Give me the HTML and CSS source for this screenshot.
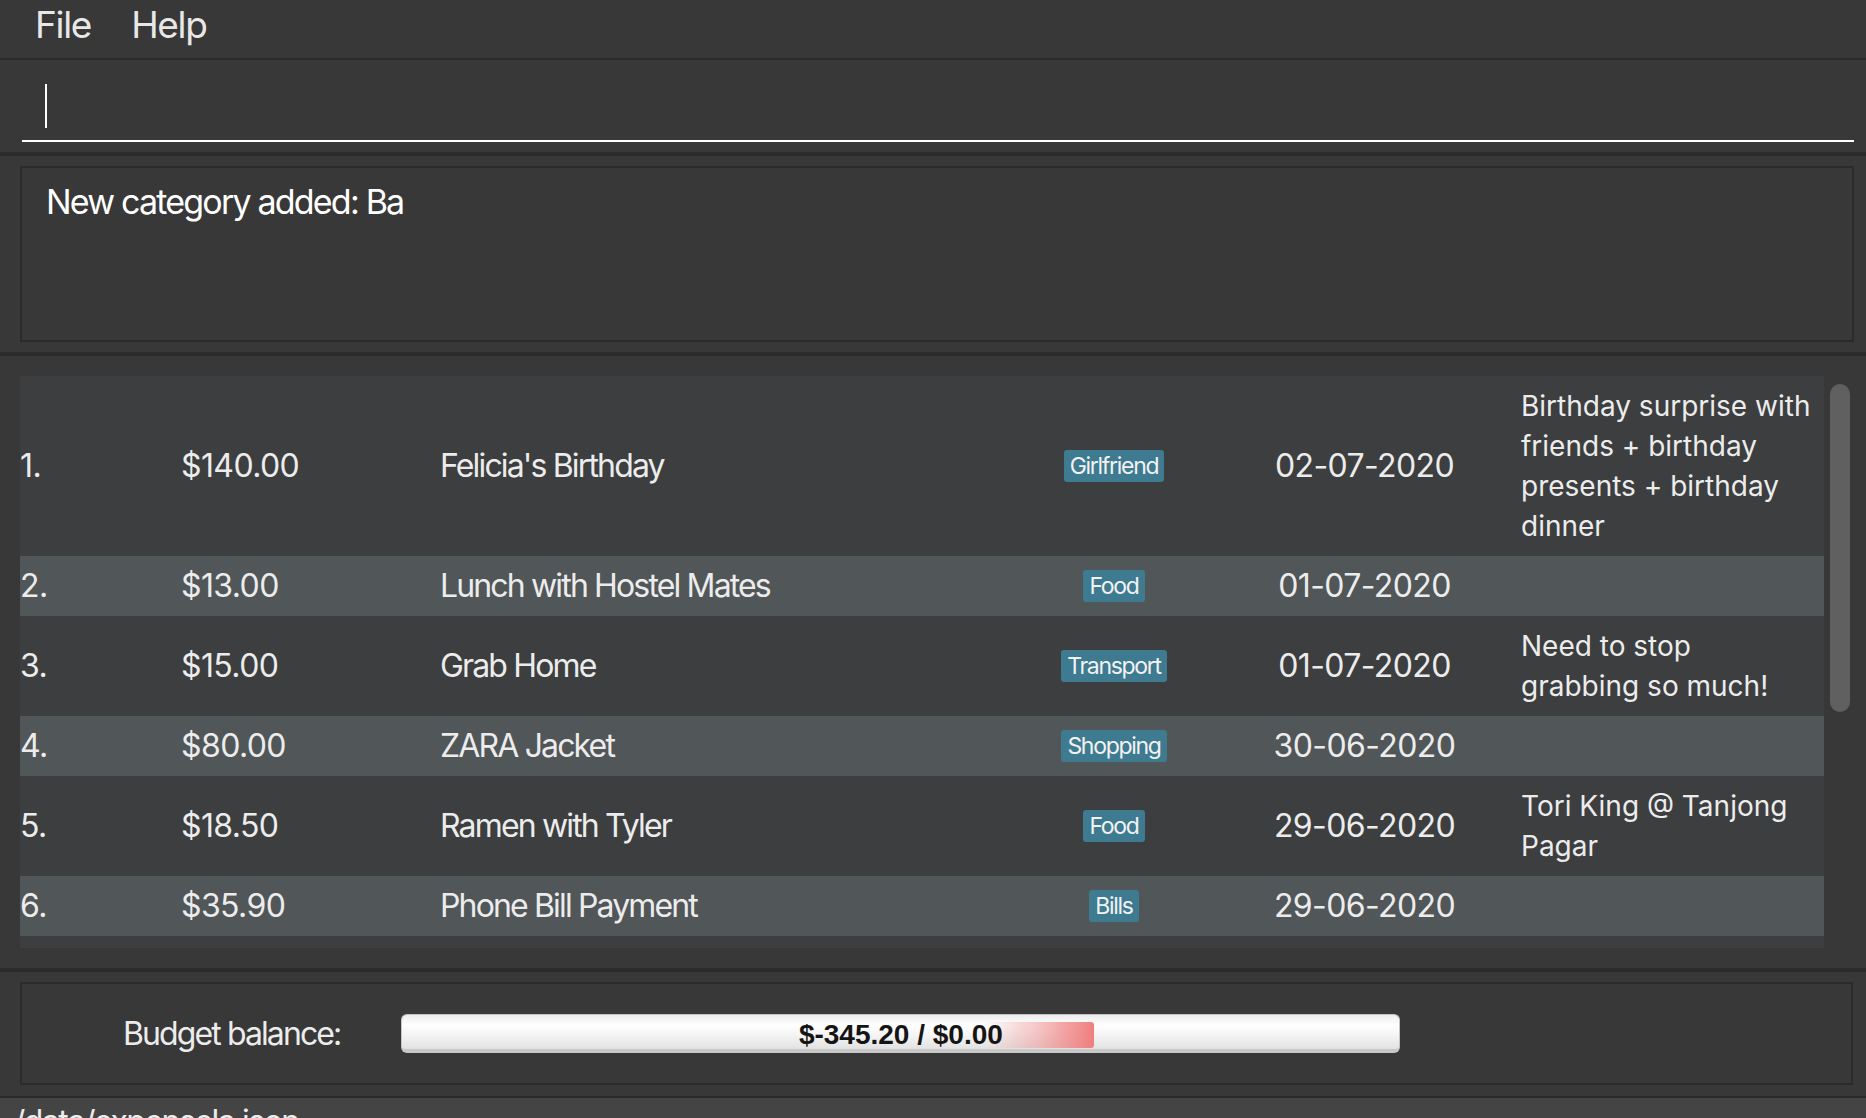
FILE: index.html
```html
<!DOCTYPE html>
<html>
<head>
<meta charset="utf-8">
<link rel="stylesheet" href="styles.css">
</head>
<body>
<div class="app">
  <div class="menubar">
    <span class="menu-item">File</span>
    <span class="menu-item">Help</span>
  </div>
  <div class="command">
    <div class="field"><span class="caret"></span></div>
  </div>
  <div class="result-pane">
    <div class="result-box">New category added: Ba</div>
  </div>
  <div class="list-pane">
    <div class="list">
      <div class="row">
        <div class="c-idx">1.</div>
        <div class="c-amt">$140.00</div>
        <div class="c-name">Felicia's Birthday</div>
        <div class="c-tag"><span class="tag">Girlfriend</span></div>
        <div class="c-date">02-07-2020</div>
        <div class="c-desc">Birthday surprise with friends + birthday presents + birthday dinner</div>
      </div>
      <div class="row alt">
        <div class="c-idx">2.</div>
        <div class="c-amt">$13.00</div>
        <div class="c-name">Lunch with Hostel Mates</div>
        <div class="c-tag"><span class="tag">Food</span></div>
        <div class="c-date">01-07-2020</div>
        <div class="c-desc"></div>
      </div>
      <div class="row">
        <div class="c-idx">3.</div>
        <div class="c-amt">$15.00</div>
        <div class="c-name">Grab Home</div>
        <div class="c-tag"><span class="tag">Transport</span></div>
        <div class="c-date">01-07-2020</div>
        <div class="c-desc">Need to stop grabbing so much!</div>
      </div>
      <div class="row alt">
        <div class="c-idx">4.</div>
        <div class="c-amt">$80.00</div>
        <div class="c-name">ZARA Jacket</div>
        <div class="c-tag"><span class="tag">Shopping</span></div>
        <div class="c-date">30-06-2020</div>
        <div class="c-desc"></div>
      </div>
      <div class="row">
        <div class="c-idx">5.</div>
        <div class="c-amt">$18.50</div>
        <div class="c-name">Ramen with Tyler</div>
        <div class="c-tag"><span class="tag">Food</span></div>
        <div class="c-date">29-06-2020</div>
        <div class="c-desc">Tori King @ Tanjong Pagar</div>
      </div>
      <div class="row alt">
        <div class="c-idx">6.</div>
        <div class="c-amt">$35.90</div>
        <div class="c-name">Phone Bill Payment</div>
        <div class="c-tag"><span class="tag">Bills</span></div>
        <div class="c-date">29-06-2020</div>
        <div class="c-desc"></div>
      </div>
    </div>
    <div class="scroll-track"><div class="scroll-thumb"></div></div>
  </div>
  <div class="budget-pane">
    <div class="budget-box">
      <span class="budget-label">Budget balance:</span>
      <div class="bar">
        <div class="bar-fill" style="width: 690px"></div>
        <div class="bar-text">$-345.20 / $0.00</div>
      </div>
    </div>
  </div>
  <div class="status-bar">./data/expensela.json</div>
</div>
</body>
</html>
```
FILE: styles.css
```css
html, body {
  margin: 0;
  padding: 0;
}
body {
  background: #383838;
  font-family: Inter, "Noto Sans", sans-serif;
  color: #ececec;
  width: 1866px;
  height: 1118px;
  overflow: hidden;
}
.app {
  display: flex;
  flex-direction: column;
  height: 1118px;
}
.menubar {
  height: 56px;
  padding-top: 2px;
  border-bottom: 2px solid #2b2b2b;
  display: flex;
  padding-left: 35px;
  gap: 40px;
  flex-shrink: 0;
}
.menu-item {
  font-size: 37px;
  line-height: 46px;
  color: #e8e8e8;
  letter-spacing: -1.3px;
}
.command {
  padding: 0 12px 10px 22px;
  border-bottom: 4px solid #2b2b2b;
  flex-shrink: 0;
}
.field {
  border-bottom: 2px solid #ffffff;
  box-sizing: border-box;
  height: 82px;
}
.caret {
  display: block;
  margin-left: 23px;
  padding-top: 24px;
  width: 2px;
}
.caret::before {
  content: "";
  display: block;
  width: 2px;
  height: 44px;
  background: #ffffff;
}
.result-pane {
  padding: 10px 12px 10px 20px;
  border-bottom: 4px solid #2b2b2b;
  flex-shrink: 0;
}
.result-box {
  border: 2px solid #2b2b2b;
  padding: 13px 0 0 24px;
  box-sizing: border-box;
  height: 176px;
  font-size: 34px;
  line-height: 41px;
  color: #ffffff;
  letter-spacing: -1.8px;
}
.list-pane {
  display: flex;
  padding: 20px 0 20px 20px;
  border-bottom: 4px solid #2b2b2b;
  height: 572px;
  flex-shrink: 0;
}
.list {
  width: 1804px;
  background: #3c3e3f;
  height: 572px;
}
.row {
  display: grid;
  grid-template-columns: 161px 259px 580px 188px 313px 293px;
  align-items: center;
  min-height: 60px;
  background: #3c3e3f;
  font-size: 32px;
  line-height: 40px;
  letter-spacing: -0.6px;
}
.row.alt {
  background: #515658;
}
.c-name {
  letter-spacing: -1.85px;
}
.c-tag {
  display: flex;
  justify-content: center;
}
.c-date {
  text-align: center;
}
.tag {
  background: #3e7b91;
  border-radius: 3px;
  font-size: 23px;
  line-height: 32px;
  padding: 0 6px;
  color: #f2f2f2;
  letter-spacing: -1.3px;
}
.c-desc {
  font-size: 28px;
  line-height: 40px;
  padding: 10px 0;
  letter-spacing: 0;
}
.scroll-track {
  width: 20px;
  margin-left: 6px;
  padding-top: 8px;
}
.scroll-thumb {
  height: 328px;
  border-radius: 10px;
  background: #606060;
}
.budget-pane {
  padding: 10px 13px 11px 20px;
  border-bottom: 2px solid #2b2b2b;
  flex-shrink: 0;
}
.budget-box {
  height: 103px;
  box-sizing: border-box;
  border: 2px solid #2b2b2b;
  display: flex;
  align-items: center;
  padding-left: 101px;
  gap: 61px;
}
.budget-label {
  font-size: 32px;
  line-height: 40px;
  letter-spacing: -1.9px;
}
.bar {
  width: 999px;
  height: 39px;
  box-sizing: border-box;
  border-radius: 6px;
  border: 1px solid #c4c4c4;
  border-bottom: 4px solid #c8c8c8;
  background: linear-gradient(to bottom, #ececec 0%, #ffffff 30%, #f4f4f4 60%, #e2e2e2 100%);
  display: grid;
  align-items: center;
  padding: 5px 2px 3px 2px;
}
.bar-fill {
  grid-area: 1 / 1;
  height: 26px;
  border-radius: 3px;
  background: linear-gradient(to right, rgba(240, 126, 126, 0) 0%, rgba(240, 126, 126, 0) 84%, rgba(240, 150, 150, 0.55) 92%, #f07e7e 100%);
}
.bar-text {
  grid-area: 1 / 1;
  text-align: center;
  font-family: "Liberation Sans", Arial, sans-serif;
  font-weight: bold;
  font-size: 28px;
  line-height: 30px;
  color: #151515;
}
.status-bar {
  flex: 1;
  background: #444444;
  font-size: 32px;
  line-height: 40px;
  padding: 4px 0 0 6px;
  overflow: hidden;
  color: #ececec;
  letter-spacing: -1.5px;
}
```
